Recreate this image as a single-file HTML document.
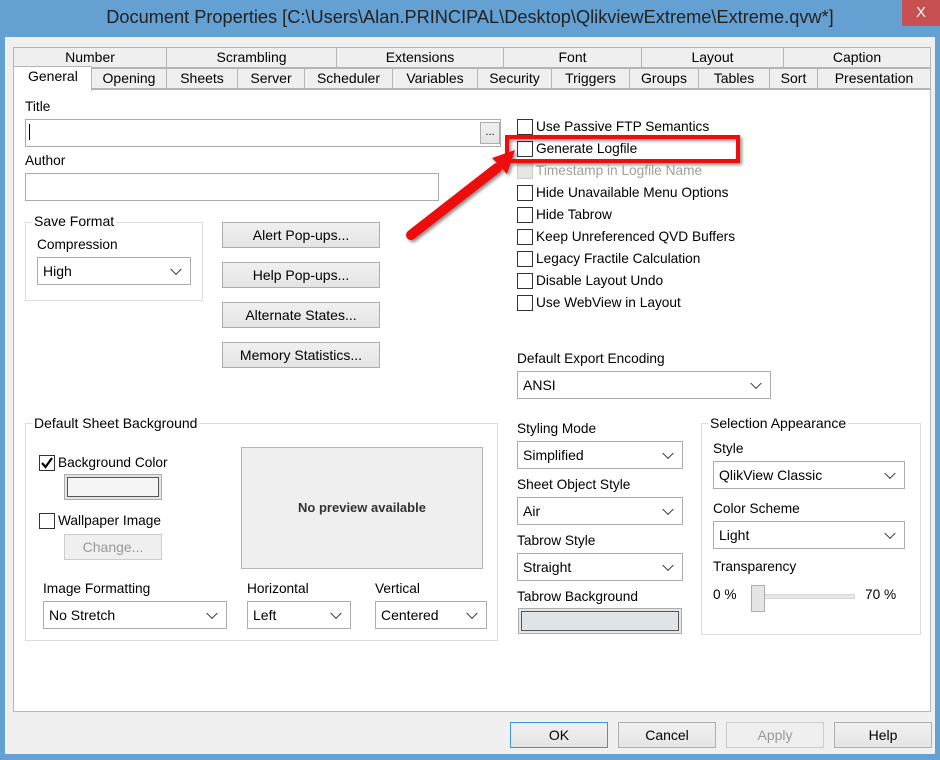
<!DOCTYPE html>
<html><head><style>
*{box-sizing:border-box}
body{margin:0;width:940px;height:760px;background:#f0f0f0;font-family:"Liberation Sans",sans-serif;font-size:13.7px;color:#000;position:relative;overflow:hidden}
.a{position:absolute}
.tb{left:0;top:0;width:940px;height:37px;background:#65a0d2}
.fl{left:0;top:37px;width:5px;height:723px;background:#65a0d2}
.fr{right:0;top:37px;width:5px;height:723px;background:#65a0d2}
.fb{left:0;bottom:0;width:940px;height:6px;background:#65a0d2}
.tab{position:absolute;border:1px solid #b5b5b5;background:#efefef;text-align:center;font-size:14px;line-height:19px}
.panel{left:13px;top:89px;width:918px;height:623px;background:#fff;border:1px solid #b5b5b5}
.inp{position:absolute;background:#fff;border:1px solid #acacac}
.btn{position:absolute;border:1px solid #adadad;background:linear-gradient(#f0f0f0,#e5e5e5);text-align:center;font-size:14px}
.sel{position:absolute;background:#fff;border:1px solid #acacac;padding-left:5px;font-size:14px}
.sel:after{content:"";position:absolute;right:10px;top:50%;width:7px;height:7px;border-right:1.5px solid #333;border-bottom:1.5px solid #333;transform:translateY(-70%) rotate(45deg)}
.cb{position:absolute;width:16px;height:16px;border:1px solid #333;background:#fff}
.grp{position:absolute;border:1px solid #dcdcdc}
.lg{position:absolute;background:#fff;padding:0 2px;font-size:14px}
</style></head><body>
<div class="a tb"></div>
<div class="a" style="left:0;top:7px;width:940px;text-align:center;font-size:18.2px;color:#222">Document Properties [C:\Users\Alan.PRINCIPAL\Desktop\QlikviewExtreme\Extreme.qvw*]</div>
<div class="a" style="left:902px;top:0;width:38px;height:26px;background:#c75050;color:#fff;text-align:center;font-size:15px;line-height:26px">X</div>
<div class="a fl"></div><div class="a fr"></div><div class="a fb"></div>

<div class="tab" style="left:13px;top:47px;width:154px">Number</div>
<div class="tab" style="left:166px;top:47px;width:171px">Scrambling</div>
<div class="tab" style="left:336px;top:47px;width:168px">Extensions</div>
<div class="tab" style="left:503px;top:47px;width:139px">Font</div>
<div class="tab" style="left:641px;top:47px;width:143px">Layout</div>
<div class="tab" style="left:783px;top:47px;width:148px">Caption</div>
<div class="tab" style="left:91px;top:68px;width:76px">Opening</div>
<div class="tab" style="left:166px;top:68px;width:72px">Sheets</div>
<div class="tab" style="left:237px;top:68px;width:68px">Server</div>
<div class="tab" style="left:304px;top:68px;width:89px">Scheduler</div>
<div class="tab" style="left:392px;top:68px;width:86px">Variables</div>
<div class="tab" style="left:477px;top:68px;width:75px">Security</div>
<div class="tab" style="left:551px;top:68px;width:79px">Triggers</div>
<div class="tab" style="left:629px;top:68px;width:70px">Groups</div>
<div class="tab" style="left:698px;top:68px;width:72px">Tables</div>
<div class="tab" style="left:769px;top:68px;width:49px">Sort</div>
<div class="tab" style="left:817px;top:68px;width:114px">Presentation</div>
<div class="a panel"></div>
<div class="tab" style="left:13px;top:66px;width:79px;height:25px;background:#fff;border-bottom:none;text-align:left;padding-left:14px">General</div>

<div class="a" style="left:25px;top:99px">Title</div>
<div class="inp" style="left:25px;top:119px;width:476px;height:28px"><div class="a" style="left:3px;top:4px;width:1px;height:16px;background:#000"></div></div>
<div class="btn" style="left:480px;top:122px;width:20px;height:22px;line-height:18px;font-size:11px">...</div>
<div class="a" style="left:25px;top:153px">Author</div>
<div class="inp" style="left:25px;top:173px;width:414px;height:28px"></div>

<div class="grp" style="left:25px;top:222px;width:178px;height:79px"></div>
<div class="lg" style="left:32px;top:213px">Save Format</div>
<div class="a" style="left:37px;top:237px">Compression</div>
<div class="sel" style="left:37px;top:257px;width:154px;height:28px;line-height:26px">High</div>

<div class="btn" style="left:222px;top:222px;width:158px;height:26px;line-height:24px">Alert Pop-ups...</div>
<div class="btn" style="left:222px;top:262px;width:158px;height:26px;line-height:24px">Help Pop-ups...</div>
<div class="btn" style="left:222px;top:302px;width:158px;height:26px;line-height:24px">Alternate States...</div>
<div class="btn" style="left:222px;top:342px;width:158px;height:26px;line-height:24px">Memory Statistics...</div>

<div class="cb" style="left:517px;top:119px"></div><div class="a" style="left:536px;top:119px">Use Passive FTP Semantics</div>
<div class="cb" style="left:517px;top:141px"></div><div class="a" style="left:536px;top:141px">Generate Logfile</div>
<div class="cb" style="left:517px;top:163px;border-color:#ccc;background:#e6e6e6"></div><div class="a" style="left:536px;top:163px;color:#a0a0a0">Timestamp in Logfile Name</div>
<div class="cb" style="left:517px;top:185px"></div><div class="a" style="left:536px;top:185px">Hide Unavailable Menu Options</div>
<div class="cb" style="left:517px;top:207px"></div><div class="a" style="left:536px;top:207px">Hide Tabrow</div>
<div class="cb" style="left:517px;top:229px"></div><div class="a" style="left:536px;top:229px">Keep Unreferenced QVD Buffers</div>
<div class="cb" style="left:517px;top:251px"></div><div class="a" style="left:536px;top:251px">Legacy Fractile Calculation</div>
<div class="cb" style="left:517px;top:273px"></div><div class="a" style="left:536px;top:273px">Disable Layout Undo</div>
<div class="cb" style="left:517px;top:295px"></div><div class="a" style="left:536px;top:295px">Use WebView in Layout</div>

<div class="a" style="left:517px;top:351px">Default Export Encoding</div>
<div class="sel" style="left:517px;top:371px;width:254px;height:28px;line-height:26px">ANSI</div>

<div class="grp" style="left:25px;top:423px;width:473px;height:218px"></div>
<div class="lg" style="left:32px;top:415px">Default Sheet Background</div>
<div class="cb" style="left:39px;top:455px"><svg width="14" height="14" style="position:absolute;left:0;top:0"><path d="M2 7 L5.5 11 L12 2" stroke="#000" stroke-width="2.2" fill="none"/></svg></div>
<div class="a" style="left:58px;top:455px">Background Color</div>
<div class="a" style="left:64px;top:474px;width:98px;height:26px;border:1px solid #adadad;background:#e5e5e5;padding:2px"><div style="width:100%;height:100%;border:1px solid #555;background:#f5f5f5"></div></div>
<div class="cb" style="left:39px;top:513px"></div>
<div class="a" style="left:58px;top:513px">Wallpaper Image</div>
<div class="btn" style="left:64px;top:534px;width:98px;height:26px;line-height:24px;color:#999;border-color:#ccc;background:#efefef">Change...</div>
<div class="a" style="left:241px;top:447px;width:242px;height:122px;border:1px solid #b5b5b5;background:#efefef;text-align:center;line-height:120px;font-weight:bold;font-size:13px;color:#333">No preview available</div>
<div class="a" style="left:43px;top:581px">Image Formatting</div>
<div class="sel" style="left:43px;top:601px;width:184px;height:28px;line-height:26px">No Stretch</div>
<div class="a" style="left:247px;top:581px">Horizontal</div>
<div class="sel" style="left:247px;top:601px;width:104px;height:28px;line-height:26px">Left</div>
<div class="a" style="left:375px;top:581px">Vertical</div>
<div class="sel" style="left:375px;top:601px;width:112px;height:28px;line-height:26px">Centered</div>

<div class="a" style="left:517px;top:421px">Styling Mode</div>
<div class="sel" style="left:517px;top:441px;width:166px;height:28px;line-height:26px">Simplified</div>
<div class="a" style="left:517px;top:477px">Sheet Object Style</div>
<div class="sel" style="left:517px;top:497px;width:166px;height:28px;line-height:26px">Air</div>
<div class="a" style="left:517px;top:533px">Tabrow Style</div>
<div class="sel" style="left:517px;top:553px;width:166px;height:28px;line-height:26px">Straight</div>
<div class="a" style="left:517px;top:589px">Tabrow Background</div>
<div class="a" style="left:518px;top:608px;width:164px;height:26px;border:1px solid #adadad;background:#e5e5e5;padding:2px"><div style="width:100%;height:100%;border:1px solid #555;background:#dfe4e6"></div></div>

<div class="grp" style="left:701px;top:423px;width:220px;height:212px"></div>
<div class="lg" style="left:708px;top:415px">Selection Appearance</div>
<div class="a" style="left:713px;top:441px">Style</div>
<div class="sel" style="left:713px;top:461px;width:192px;height:28px;line-height:26px">QlikView Classic</div>
<div class="a" style="left:713px;top:501px">Color Scheme</div>
<div class="sel" style="left:713px;top:521px;width:192px;height:28px;line-height:26px">Light</div>
<div class="a" style="left:713px;top:559px">Transparency</div>
<div class="a" style="left:713px;top:587px">0 %</div>
<div class="a" style="left:865px;top:587px">70 %</div>
<div class="a" style="left:752px;top:594px;width:103px;height:5px;background:#e7e7e7;border:1px solid #d6d6d6"></div>
<div class="a" style="left:751px;top:585px;width:14px;height:27px;background:#e5e5e5;border:1px solid #adadad"></div>

<div class="btn" style="left:510px;top:722px;width:98px;height:26px;line-height:24px;border-color:#3c93e0">OK</div>
<div class="btn" style="left:618px;top:722px;width:98px;height:26px;line-height:24px">Cancel</div>
<div class="btn" style="left:726px;top:722px;width:98px;height:26px;line-height:24px;color:#999;border-color:#ccc;background:#efefef">Apply</div>
<div class="btn" style="left:834px;top:722px;width:98px;height:26px;line-height:24px">Help</div>

<svg class="a" style="left:0;top:0" width="940" height="760">
<defs><filter id="sh"><feDropShadow dx="2" dy="2" stdDeviation="1.5" flood-color="#000" flood-opacity="0.45"/></filter></defs>
<g filter="url(#sh)">
<rect x="507" y="137" width="231" height="24" fill="none" stroke="#ee1111" stroke-width="4"/>
<line x1="411" y1="235" x2="497" y2="168" stroke="#ee1111" stroke-width="10" stroke-linecap="round"/>
<polygon points="492,158 515,150 507,174" fill="#ee1111"/>
</g>
</svg>
</body></html>
